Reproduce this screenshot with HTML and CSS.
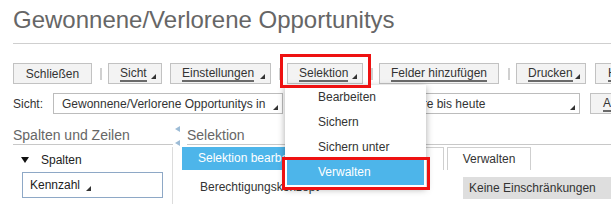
FILE: index.html
```html
<!DOCTYPE html>
<html lang="de">
<head>
<meta charset="utf-8">
<title>Gewonnene/Verlorene Opportunitys</title>
<link rel="stylesheet" href="styles.css">
</head>
<body>
<div class="page">
  <h1 class="title">Gewonnene/Verlorene Opportunitys</h1>

  <div class="toolbar">
    <span class="btn w-close"><span class="lbl">Schließen</span></span>
    <span class="sep"></span>
    <span class="btn dd w-view"><span class="lbl u">Sicht</span><span class="tri"></span></span>
    <span class="btn dd w-settings"><span class="lbl u">Einstellungen</span><span class="tri"></span></span>
    <span class="sep"></span>
    <span class="btn dd w-select"><span class="lbl u">Selektion</span><span class="tri"></span></span>
    <span class="sep"></span>
    <span class="btn w-fields"><span class="lbl u">Felder hinzufügen</span></span>
    <span class="sep"></span>
    <span class="btn dd w-print"><span class="lbl u">Drucken</span><span class="tri"></span></span>
    <span class="btn"><span class="lbl u">Hilfe</span></span>
  </div>

  <div class="viewrow">
    <span class="vlabel">Sicht:</span>
    <span class="select sel-view"><span class="stext">Gewonnene/Verlorene Opportunitys in diesem Jahr</span><span class="tri"></span></span>
    <span class="vlabel vlabel2">Zeitraum:</span>
    <span class="select sel-time"><span class="stext">Alle Jahre bis heute</span><span class="tri"></span></span>
    <span class="btn"><span class="lbl u">Alle anzeigen</span></span>
  </div>

  <div class="panels">
    <div class="left">
      <div class="phead">Spalten und Zeilen</div>
      <div class="lbody">
        <div class="tree"><span class="down"></span><span>Spalten</span></div>
        <div class="field"><span>Kennzahl</span><span class="tri"></span></div>
      </div>
    </div>
    <div class="splitter">
      <span class="arrow"></span>
      <span class="arrow"></span>
    </div>
    <div class="right">
      <div class="phead">Selektion</div>
      <div class="rbody">
        <div class="list">
          <div class="item active">Selektion bearbeiten</div>
          <div class="item">Berechtigungskonzept</div>
        </div>
        <div class="tabarea">
          <div class="tabs">
            <span class="tab tab-wide">Sichern</span>
            <span class="tab">Verwalten</span>
          </div>
          <div class="note">Keine Einschränkungen</div>
        </div>
      </div>
    </div>
  </div>

  <div class="menu">
    <div class="mitem">Bearbeiten</div>
    <div class="mitem">Sichern</div>
    <div class="mitem">Sichern unter</div>
    <div class="mitem hover">Verwalten</div>
  </div>

  <div class="mark mark-btn"></div>
  <div class="mark mark-item"></div>
</div>
</body>
</html>
```

FILE: styles.css
```css
html, body {
  margin: 0;
  padding: 0;
  background: #fff;
}

body {
  font-family: "Liberation Sans", Arial, sans-serif;
  color: #333;
  width: 611px;
  height: 204px;
  overflow: hidden;
}

.page {
  position: relative;
  width: 611px;
  height: 204px;
  overflow: hidden;
}

.title {
  margin: 0 0 0 13px;
  padding-top: 6px;
  height: 37px;
  box-sizing: content-box;
  font-size: 24px;
  font-weight: normal;
  line-height: 28px;
  color: #666;
  border-bottom: 1px solid #cfcfcf;
  white-space: nowrap;
}

.toolbar {
  display: flex;
  align-items: center;
  margin: 19px 0 0 13px;
  height: 21px;
  white-space: nowrap;
}

.btn {
  display: flex;
  align-items: center;
  flex: none;
  height: 21px;
  box-sizing: border-box;
  border: 1px solid #c2c2c2;
  background: #f3f3f3;
  padding: 0 12px;
  margin-right: 8px;
  font-size: 12px;
  color: #333;
  overflow: hidden;
}

.btn.dd {
  padding: 0 5px 0 11px;
}

.btn.dd .tri {
  margin-left: auto;
}

.w-close { width: 79px; justify-content: center; }
.w-view { width: 54px; }
.w-settings { width: 101px; }
.w-select { width: 76px; }
.w-fields { width: 120px; justify-content: center; margin-right: 9px; }
.w-print { width: 70px; margin-right: 9px; }

.lbl {
  line-height: 14px;
}

.lbl.u {
  border-bottom: 2px solid #6a6a6a;
  line-height: 13px;
  margin-top: 2px;
}

.tri {
  display: inline-block;
  flex: none;
  width: 0;
  height: 0;
  border-style: solid;
  border-width: 0 0 5px 5px;
  border-color: transparent transparent #333 transparent;
  margin-left: 5px;
  margin-top: 6px;
}

.sep {
  flex: none;
  width: 2px;
  height: 12px;
  background: #d0d0d0;
  margin: 0 6px 0 0;
}

.viewrow {
  display: flex;
  align-items: center;
  margin: 9px 0 0 13px;
  height: 21px;
  white-space: nowrap;
  font-size: 12px;
}

.vlabel {
  flex: none;
  width: 40px;
  color: #333;
}

.vlabel2 {
  width: 56px;
  margin-left: 33px;
}

.select {
  flex: none;
  display: flex;
  align-items: center;
  height: 21px;
  box-sizing: border-box;
  border: 1px solid #bcbcbc;
  background: #fff;
  padding: 0 4px 0 8px;
}

.select .stext {
  flex: 1;
  overflow: hidden;
  white-space: nowrap;
}

.select .tri {
  margin-top: 8px;
}

.sel-view {
  width: 230px;
}

.sel-time {
  width: 208px;
  margin-right: 10px;
  padding-left: 7px;
}

.panels {
  display: flex;
  margin: 12px 0 0 13px;
  font-size: 12px;
}

.left {
  flex: none;
  width: 160px;
}

.phead {
  height: 18px;
  font-size: 14px;
  line-height: 18px;
  color: #666;
  border-bottom: 1px solid #c8c8c8;
  white-space: nowrap;
}

.lbody {
  border-right: 1px solid #dcdcdc;
  height: 60px;
  margin-top: 2px;
}

.tree {
  display: flex;
  align-items: center;
  height: 25px;
  padding-left: 8px;
  color: #222;
}

.down {
  width: 0;
  height: 0;
  border-style: solid;
  border-width: 6px 4px 0 4px;
  border-color: #111 transparent transparent transparent;
  margin-right: 12px;
}

.field {
  display: flex;
  align-items: center;
  width: 141px;
  height: 26px;
  box-sizing: border-box;
  margin-left: 9px;
  border: 1px solid #8ea8c6;
  padding-left: 7px;
  color: #222;
}

.field .tri {
  margin-left: 6px;
  margin-top: 6px;
}

.splitter {
  flex: none;
  width: 14px;
  display: flex;
  flex-direction: column;
  align-items: flex-start;
  padding-left: 2px;
  box-sizing: border-box;
}

.arrow {
  width: 0;
  height: 0;
  border-style: solid;
  border-width: 3.5px 5px 3.5px 0;
  border-color: transparent #9dbcd6 transparent transparent;
  margin-top: 0;
}

.arrow + .arrow {
  margin-top: 8px;
}

.right {
  flex: 1;
  min-width: 0;
}

.rbody {
  display: flex;
  margin-left: -5px;
  margin-top: 2px;
}

.list {
  flex: none;
  width: 138px;
}

.item {
  height: 23px;
  line-height: 23px;
  padding-left: 16px;
  white-space: nowrap;
  color: #333;
  font-size: 12px;
}

.item + .item {
  margin-top: 6px;
  padding-left: 18px;
}

.item.active {
  background: #4db5ea;
  color: #fff;
}

.tabarea {
  flex: 1;
  margin-left: 3px;
}

.tabs {
  display: flex;
  gap: 3px;
  height: 22px;
}

.tab {
  flex: none;
  display: flex;
  align-items: center;
  justify-content: center;
  box-sizing: border-box;
  height: 23px;
  border: 1px solid #cfcfcf;
  border-bottom: none;
  background: #fff;
  color: #333;
  font-size: 12px;
  width: 84px;
}

.tab-wide {
  width: 121px;
}

.note {
  margin: 8px 0 0 140px;
  height: 22px;
  line-height: 22px;
  background: #dedede;
  color: #333;
  padding-left: 6px;
  white-space: nowrap;
}

.menu {
  position: absolute;
  left: 285px;
  top: 85px;
  width: 141px;
  box-sizing: border-box;
  padding: 0 2px 2px;
  background: #fff;
  box-shadow: 0 2px 7px rgba(0, 0, 0, 0.35);
  font-size: 12px;
}

.mitem {
  height: 25px;
  line-height: 25px;
  padding-left: 31px;
  color: #333;
  white-space: nowrap;
}

.mitem.hover {
  background: #4db5ea;
  color: #fff;
}

.mark {
  position: absolute;
  border: 3px solid #ee1111;
  box-sizing: border-box;
}

.mark-btn {
  left: 280px;
  top: 54px;
  width: 91px;
  height: 34px;
}

.mark-item {
  left: 282px;
  top: 157px;
  width: 148px;
  height: 33px;
}
```
